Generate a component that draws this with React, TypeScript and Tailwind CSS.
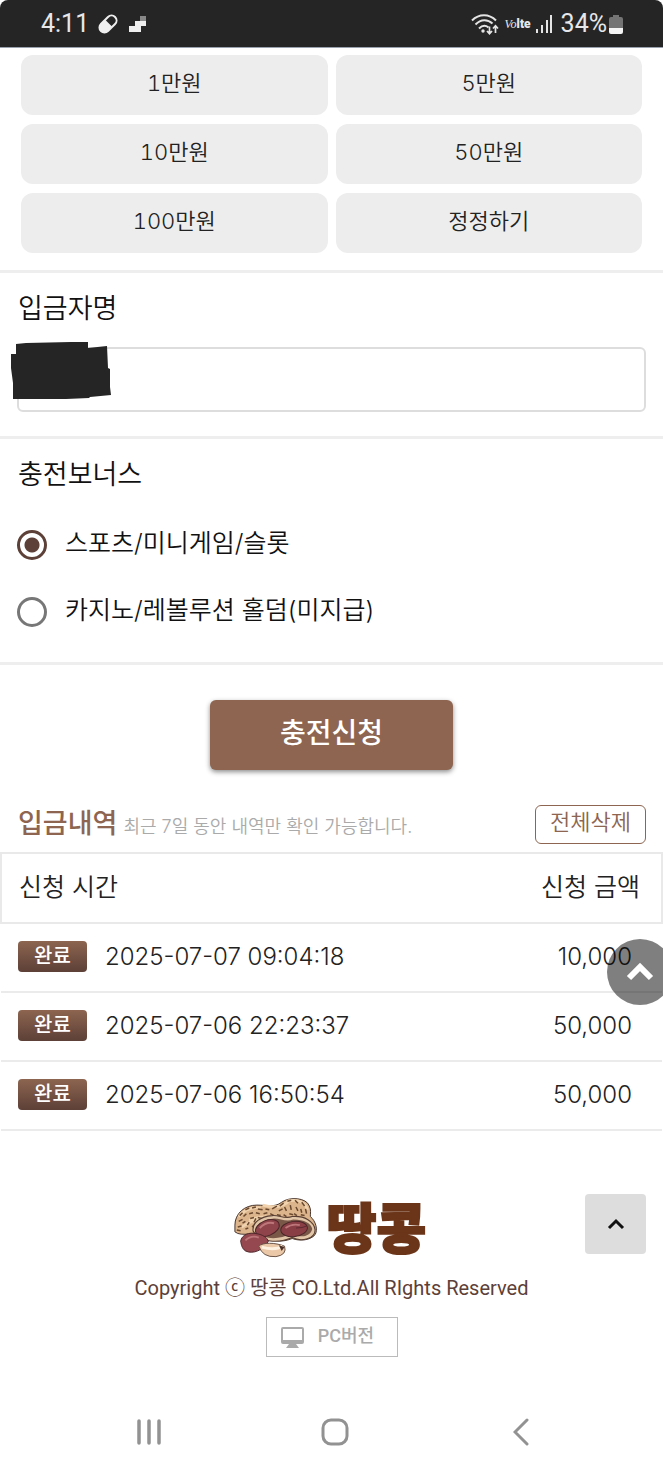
import React, { useState } from "react";

const amounts = ["1만원", "5만원", "10만원", "50만원", "100만원", "정정하기"];
const bonuses = ["스포츠/미니게임/슬롯", "카지노/레볼루션 홀덤(미지급)"];
const history = [
  { time: "2025-07-07 09:04:18", amount: "10,000" },
  { time: "2025-07-06 22:23:37", amount: "50,000" },
  { time: "2025-07-06 16:50:54", amount: "50,000" },
];

function StatusBar() {
  return (
    <header className="flex h-12 items-center justify-between rounded-t-lg border-b border-gray-400 bg-[#252525] pr-10 pl-[41px] font-['Roboto',sans-serif] text-[25px] font-normal text-gray-200">
      <div className="flex items-center">
        <span>4:11</span>
        <svg className="ml-2 h-[22px] w-[22px]" viewBox="0 0 22 22" aria-hidden="true">
          <g transform="rotate(45 11 11)">
            <rect x="6" y="1" width="10" height="20" rx="5" fill="none" stroke="#eee" strokeWidth="2" />
            <path d="M6 10h10v6a5 5 0 0 1-10 0z" fill="#eee" />
          </g>
        </svg>
        <svg className="ml-2.5 h-[18px] w-[18px]" viewBox="0 0 18 18" aria-hidden="true">
          <path d="M0 11h6V6h5V1h6v10h-5v6H0z" fill="#eee" />
          <path d="M11 1h6v5h-6z" fill="#888" />
        </svg>
      </div>
      <div className="flex items-center">
        <svg className="h-[24px] w-[30px]" viewBox="0 0 30 24" aria-hidden="true" fill="none" stroke="#e4e4e4" strokeWidth="2">
          <path d="M1 8.500C8 1.500 18 1.500 25 8.500M4.500 12.500C10 7 16.500 7 21.500 11.500M8 16.500c3.500-3.500 6.500-3.500 9.500-1" />
          <circle cx="12" cy="19" r="1.700" fill="#e4e4e4" stroke="none" />
          <path d="M18.500 14.500v7M16 19l2.500 2.800L21 19M24.500 21v-7M22 16.500l2.500-2.800 2.500 2.800" strokeWidth="1.700" />
        </svg>
        <span className="ml-1 font-['Liberation_Serif',serif] text-[12px] italic">Vo</span>
        <span className="text-[12px] font-black">lte</span>
        <svg className="ml-1 h-[18px] w-[18px]" viewBox="0 0 18 18" aria-hidden="true" fill="#e4e4e4">
          <path d="M1 14h2v4H1zM6 10h2v8H6zM11 5h2v13h-2zM15 0h2v18h-2z" />
        </svg>
        <span className="ml-2">34%</span>
        <svg className="ml-0.5 h-5 w-[14px]" viewBox="0 0 14 20" aria-hidden="true">
          <path d="M4 1h6v2h2q2 0 2 2v9H0V5q0-2 2-2h2z" fill="#747474" />
          <path d="M0 14h14v4q0 2-2 2H2q-2 0-2-2z" fill="#f4f4f4" />
        </svg>
      </div>
    </header>
  );
}

function Peanut() {
  return (
    <svg className="h-[62px] w-[84px]" viewBox="0 0 88 64" aria-hidden="true" strokeLinejoin="round">
      <path d="M2 29C2 17 12 8 25 8c11 0 18 3 26-3C59-1 77 0 80 9c2 4 1 8 1 11 6 5 8 14 5 19-5 6-16 7-24 4-10 4-20 4-29-3C24 35 9 42 2 36z" fill="#dcb58d" stroke="#42302a" strokeWidth="1" />
      <path d="M6 20q9-11 23-9M9 31q11-8 24-9M31 8q20 5 28-5M56 4q18-4 22 9M17 24q12-5 24-3" fill="none" stroke="#f0d3ae" strokeWidth="3" />
      <path d="M7 19l3-3M13 13l4-2M20 11l4-1M26 12l5 1M34 12l4 1M41 12l5-3M49 9l4-3M57 4l4-1M65 3l3 3M72 5l3 4M76 12l1 5M6 25l4-2M11 20l3-3M17 17l4-1M24 16l4 1M32 17l4-1M39 17l4 2M48 14l4-2M54 10l2 4M60 8l1 5M66 10l2 4M71 12l1 4M5 31l4-1M10 27l3-2M15 29l2-3M18 22l4-1M26 21l4 1M22 26l2-4M46 18l4 1M53 18l3 2M59 17l4 1M64 17l3 2M71 18l4 1M13 33l3-1M4 34l4 1M20 31l2-2" stroke="#6b4a30" strokeWidth="1.600" fill="none" />
      <path d="M21 35c-1-9 8-15 20-16 7-1 13 4 21 1 13-1 23 5 24 14 0 9-14 13-24 8-13 6-34 6-41-7z" fill="#e2c6a8" stroke="#5a4034" strokeWidth="1.200" />
      <path d="M25 36c0-9 9-13 18-14 7 0 13 4 20 1 12 0 19 4 20 10-2 8-12 10-22 5-12 6-28 7-36-2z" fill="#7a5848" />
      <ellipse cx="36" cy="32" rx="13" ry="8" transform="rotate(-21 36 32)" fill="#8f434a" stroke="#4a2528" />
      <ellipse cx="64" cy="33" rx="14" ry="8" transform="rotate(-7 64 33)" fill="#893d44" stroke="#4a2528" />
      <path d="M8 46c1-7 9-10 17-8 6 1 11 4 12 8-5 9-16 14-24 10-4-3-4-6-5-10z" fill="#964850" stroke="#4a2528" />
      <path d="M28 32q7-7 15-5M55 32q7-5 15-3M13 45q6-6 14-3" fill="none" stroke="#bd767a" strokeWidth="2" />
      <path d="M66 32q7 0 11-2" stroke="#592a30" fill="none" />
      <path d="M27 51c4-4 17-4 27 0q3 9-9 11-14 1-18-11z" fill="#eac8a8" stroke="#665044" />
      <path d="M30 52q14 4 22-1" stroke="#fff1df" strokeWidth="3" fill="none" />
      <path d="M48 50l6 2-3 4z" fill="#4a3027" />
    </svg>
  );
}

export default function App() {
  const [bonus, setBonus] = useState(0);
  return (
    <div className="relative overflow-hidden bg-white font-['Inter','Noto_Sans_CJK_KR',sans-serif] font-[350] text-[#111]">
      <StatusBar />
      <main>
        <section className="grid grid-cols-2 gap-x-2 gap-y-[9px] border-b-[3px] border-[#eee] px-[21px] pt-[7px] pb-[17px]">
          {amounts.map((a) => (
            <button key={a} type="button" className="h-[60px] rounded-xl bg-[#ededed] pb-1 text-[22px] text-[#222] tabular-nums">
              {a}
            </button>
          ))}
        </section>

        <section className="border-b-[3px] border-[#eee] px-[17px] pt-[18px] pb-6">
          <label htmlFor="depositor" className="block pl-px text-[27px] leading-9">
            입금자명
          </label>
          <div className="relative mt-5">
            <input id="depositor" type="text" className="block h-[65px] w-full rounded-md border-2 border-[#ddd] px-4 text-[25px] outline-none" />
            <svg className="pointer-events-none absolute -top-[6px] -left-[7px] h-[60px] w-[102px]" viewBox="0 0 102 60" aria-hidden="true">
              <path d="M6 3L16 2 61 1 78 1v6l19-2 1 22 2 1v18l1 8-21 2-1 1-23 1H3V42L1 27V13h5z" fill="#252525" />
            </svg>
          </div>
        </section>

        <fieldset className="border-b-[3px] border-[#eee] px-[17px] pt-[18px] pb-8">
          <legend className="float-left mb-[34px] w-full pl-px text-[27px] leading-9">충전보너스</legend>
          <div className="clear-both flex flex-col gap-[31px]">
            {bonuses.map((b, i) => (
              <label key={b} className="flex h-9 items-center gap-[18px] text-[25px]">
                <input
                  type="radio"
                  name="bonus"
                  checked={bonus === i}
                  onChange={() => setBonus(i)}
                  className="h-[30px] w-[30px] shrink-0 appearance-none rounded-full border-[3px] border-[#777] checked:border-[#5d4037] checked:bg-[radial-gradient(circle,#5d4037_0_7px,transparent_8px)]"
                />
                <span className="pb-0.5">{b}</span>
              </label>
            ))}
          </div>
        </fieldset>

        <div className="flex justify-center pt-[35px]">
          <button type="button" className="h-[70px] w-[243px] rounded-md bg-[#8d6550] pb-1 text-[28px] font-medium text-white shadow-[0_2px_5px_rgba(0,0,0,0.45)]">
            충전신청
          </button>
        </div>

        <section>
          <div className="flex items-center justify-between px-[17px] pt-[35px] pb-2">
            <div className="flex items-baseline gap-1.5 pb-0.5 pl-px">
              <h2 className="text-[27px] leading-9 font-medium text-[#8d6550]">입금내역</h2>
              <span className="text-[18px] text-[#aaa]">최근 7일 동안 내역만 확인 가능합니다.</span>
            </div>
            <button type="button" className="h-[39px] w-[111px] rounded-md border border-[#8d6550] pb-1 text-[22px] text-[#8d6550]">
              전체삭제
            </button>
          </div>
          <div className="relative">
            <table className="w-full border-collapse text-[#222]">
              <thead>
                <tr className="h-[70px] border-2 border-[#e9e9e9] text-[25px]">
                  <th scope="col" className="pl-[17px] text-left font-[350]">신청 시간</th>
                  <th scope="col" className="pr-[21px] text-right font-[350]">신청 금액</th>
                </tr>
              </thead>
              <tbody>
                {history.map((h) => (
                  <tr key={h.time} className="h-[69px] border-b-2 border-[#ebebeb] text-[24px]">
                    <td className="pb-0.5 pl-[17px]">
                      <div className="flex items-center gap-[18px]">
                        <span className="flex h-[31px] w-[69px] items-center justify-center rounded bg-linear-to-b from-[#8d6550] to-[#5d4037] pb-0.5 text-[20px] font-medium text-white">
                          완료
                        </span>
                        <span>{h.time}</span>
                      </div>
                    </td>
                    <td className="pr-[30px] pb-0.5 text-right">{h.amount}</td>
                  </tr>
                ))}
              </tbody>
            </table>
            <button type="button" aria-label="맨 위로" className="absolute top-[87px] -right-[10px] flex h-[66px] w-[66px] items-center justify-center rounded-full bg-black/50">
              <svg className="h-5 w-7" viewBox="0 0 28 20" fill="none" aria-hidden="true">
                <path d="M3 16L14 5l11 11" stroke="white" strokeWidth="6" />
              </svg>
            </button>
          </div>
        </section>
      </main>

      <footer className="relative flex flex-col items-center pt-[65px] text-[#5d4037]">
        <div className="flex h-16 items-center gap-2.5 pr-1">
          <Peanut />
          <span className="pt-1 text-[54px] leading-[64px] font-black text-[#6b3519] [-webkit-text-stroke:2px_#6b3519]">땅콩</span>
        </div>
        <button type="button" aria-label="위로" className="absolute top-[63px] right-[17px] flex h-[60px] w-[61px] items-center justify-center rounded bg-[#ddd]">
          <svg className="h-3 w-[18px]" viewBox="0 0 18 12" fill="none" aria-hidden="true">
            <path d="M2 10l7-7 7 7" stroke="#111" strokeWidth="3" />
          </svg>
        </button>
        <p className="mt-3 font-['Roboto','Noto_Sans_CJK_KR',sans-serif] text-[20px] leading-8 font-normal">Copyright ⓒ 땅콩 CO.Ltd.All RIghts Reserved</p>
        <a href="#pc" className="mt-[13px] flex h-10 w-[132px] items-center justify-center gap-[14px] border border-[#bbb] pr-2 font-['Roboto','Noto_Sans_CJK_KR',sans-serif] text-[18px] font-medium text-[#aaa]">
          <svg className="h-[21px] w-[23px]" viewBox="0 0 23 21" aria-hidden="true" fill="#aaa">
            <path fillRule="evenodd" d="M2 0h19q2 0 2 2v13q0 2-2 2h-6l3 4H5l3-4H2q-2 0-2-2V2q0-2 2-2zm0 2v11h19V2z" />
          </svg>
          <span className="pb-1">PC버전</span>
        </a>
      </footer>

      <nav aria-label="시스템 탐색" className="mt-10 mb-1 grid h-[70px] grid-cols-3 pr-[49px] pl-[56px]">
        <button type="button" aria-label="최근 앱" className="flex items-center justify-center">
          <svg className="h-7 w-7" viewBox="0 0 28 28" stroke="#929292" strokeWidth="3.500" strokeLinecap="round" aria-hidden="true">
            <path d="M4 3v22M14 3v22M24 3v22" />
          </svg>
        </button>
        <button type="button" aria-label="홈" className="flex items-center justify-center">
          <svg className="h-7 w-7" viewBox="0 0 28 28" fill="none" stroke="#929292" strokeWidth="3" aria-hidden="true">
            <rect x="2" y="2" width="24" height="24" rx="8" />
          </svg>
        </button>
        <button type="button" aria-label="뒤로" className="flex items-center justify-center">
          <svg className="h-7 w-4" viewBox="0 0 16 28" fill="none" stroke="#929292" strokeWidth="3" strokeLinecap="round" aria-hidden="true">
            <path d="M14 2L2 14l12 12" />
          </svg>
        </button>
      </nav>
    </div>
  );
}
